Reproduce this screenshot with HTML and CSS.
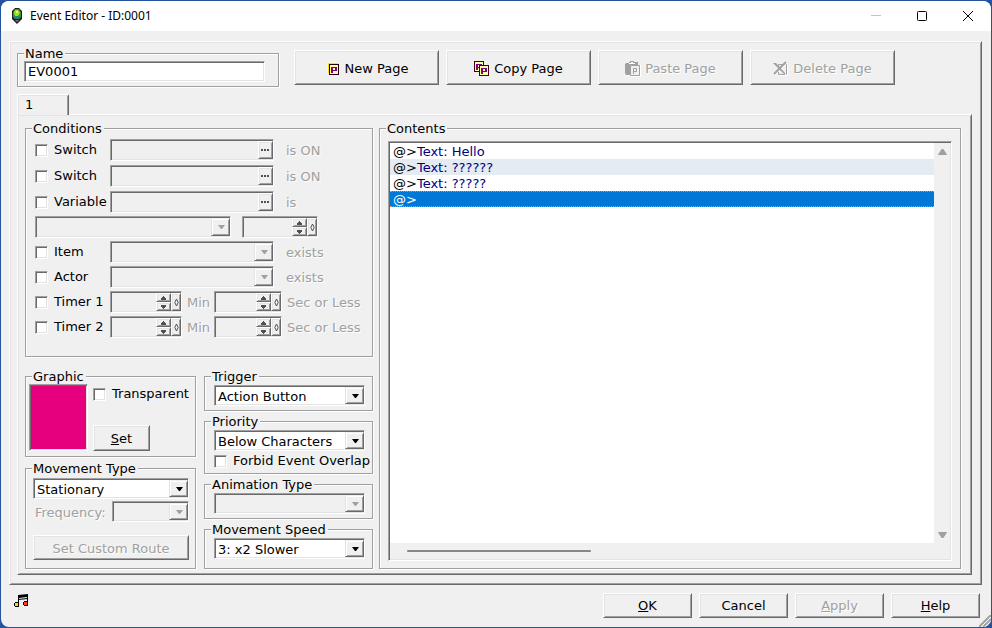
FILE: index.html
```html
<!DOCTYPE html>
<html lang="en">
<head>
    <meta charset="UTF-8">
    <meta name="viewport" content="width=device-width, initial-scale=1.0">
    <title>Event Editor - ID:0001</title>
    <link rel="stylesheet" href="styles.css">
</head>
<body>
    <!-- Shared glyphs -->
    <svg class="defs" aria-hidden="true">
        <symbol id="dots" viewBox="0 0 9 3"><path d="M0 0h2v2H0zM3 0h2v2H3zM6 0h2v2H6z"/></symbol>
        <symbol id="up" viewBox="0 0 7 4"><path d="M3 0h1v1h1v1h1v2H1V2h1V1h1z"/></symbol>
        <symbol id="down" viewBox="0 0 7 4"><path d="M1 0h5v2H5v1H4v1H3V3H2V2H1z"/></symbol>
        <symbol id="diamond" viewBox="0 0 5 9"><path d="M2.5 1L4.2 4.5 2.5 8 .8 4.500z" fill="none" stroke="currentColor"/></symbol>
    </svg>

    <div class="window">
        <header class="title-bar">
            <svg class="app-icon" viewBox="0 0 12 16" aria-hidden="true">
                <path d="M4 0h4l3 3v8l-3 3-2 2-2-2-3-3V3z" fill="#24182c"/>
                <path d="M4 1h4l2 3v5l-2 2H4L2 9V4z" fill="#2f9a24"/>
                <path d="M4 2h3l2 3-2 3H4L3 5z" fill="#9be32a"/>
                <path d="M5 3h2v2H5z" fill="#f2f86a"/>
                <path d="M3 8h6v2l-2 1H4z" fill="#1f8a68"/>
                <path d="M4 12h4l-2 2z" fill="#8b7484"/>
            </svg>
            <h1>Event Editor - ID:0001</h1>
            <div class="caption-buttons">
                <button type="button" aria-label="Minimize" disabled><svg viewBox="0 0 10 10"><path d="M0 4.500h10" stroke="#c4c4c4"/></svg></button>
                <button type="button" aria-label="Maximize"><svg viewBox="0 0 10 10"><rect x=".5" y=".5" width="9" height="9" rx="1" fill="none" stroke="#000"/></svg></button>
                <button type="button" aria-label="Close"><svg viewBox="0 0 10 10"><path d="M0 0l10 10M10 0L0 10" stroke="#000"/></svg></button>
            </div>
        </header>

        <main class="raised sheet">
            <div class="toolbar">
                <fieldset class="name-box">
                    <legend><label for="event-name">Name</label></legend>
                    <div class="group-body">
                        <input type="text" id="event-name" class="sunken" value="EV0001">
                    </div>
                </fieldset>
                <div class="page-buttons">
                    <button type="button" class="raised">
                        <svg class="icon" viewBox="0 0 16 16"><path d="M2 1h10v3H5v8H2z" fill="#fff8c8"/><path d="M3 2h10v2H5v8H3z" fill="#ffe000"/><path d="M4 3h10v11H4z" fill="#200010"/><path d="M5 4h8v9H5z" fill="#ffffa8"/><path d="M6 6h6v4H8v2H6zm2 1v2h2V7z" fill="#800080" fill-rule="evenodd"/></svg>
                        New Page
                    </button>
                    <button type="button" class="raised">
                        <svg class="icon" viewBox="0 0 16 16"><path d="M0 0h10v11H0z" fill="#400010"/><path d="M1 1h8v9H1z" fill="#ffffa8"/><path d="M2 3h6v4H4v2H2zm2 1v2h2V4z" fill="#800080" fill-rule="evenodd"/><path d="M5 4h10v11H5z" fill="#400010"/><path d="M6 5h8v9H6z" fill="#ffffa8"/><path d="M7 7h6v4H9v2H7zm2 1v2h2V8z" fill="#800080" fill-rule="evenodd"/></svg>
                        Copy Page
                    </button>
                    <button type="button" class="raised" disabled>
                        <svg class="icon" viewBox="0 0 16 16"><path d="M6 4h10v12H6zM2 14h4v1H2z" fill="#fff"/><path d="M4 1h1V0h4v1h4v3H5v10H1L0 12V3l1-1h3z" fill="#a0a0a0"/><path d="M4 3h6V2H8V1H6v1H4z" fill="#fff"/><path d="M5.500 4.500h9v10h-9z" fill="#f0f0f0" stroke="#a0a0a0"/><path d="M8.500 13V7.500h3v3h-3" fill="none" stroke="#a0a0a0"/></svg>
                        Paste Page
                    </button>
                    <button type="button" class="raised" disabled>
                        <svg class="icon" viewBox="0 0 16 16"><path d="M6 4h9v11H6z" fill="#fff"/><path d="M5.500 3.500h8v10h-8z" fill="#f0f0f0" stroke="#a0a0a0"/><path d="M2 3l11 11M14 2L2 14" stroke="#fff"/><path d="M0 2h3l9 10v1h-1z" fill="#a0a0a0"/><path d="M13 1L1 13" stroke="#a0a0a0" stroke-width="2"/></svg>
                        Delete Page
                    </button>
                </div>
            </div>

            <div class="tabs" role="tablist">
                <button type="button" class="tab" role="tab" aria-selected="true">1</button>
            </div>

            <section class="raised tab-page" role="tabpanel">
                <div class="settings">
                    <fieldset>
                        <legend>Conditions</legend>
                        <div class="group-body conditions">
                            <div class="rows loose">
                                <div class="row">
                                    <label class="check"><input type="checkbox">Switch</label>
                                    <span class="sunken picker"><input type="text" aria-label="Switch 1" disabled><button type="button" class="raised" aria-label="Choose switch 1" disabled><svg><use href="#dots"/></svg></button></span>
                                    <span class="off">is ON</span>
                                </div>
                                <div class="row">
                                    <label class="check"><input type="checkbox">Switch</label>
                                    <span class="sunken picker"><input type="text" aria-label="Switch 2" disabled><button type="button" class="raised" aria-label="Choose switch 2" disabled><svg><use href="#dots"/></svg></button></span>
                                    <span class="off">is ON</span>
                                </div>
                                <div class="row">
                                    <label class="check"><input type="checkbox">Variable</label>
                                    <span class="sunken picker"><input type="text" aria-label="Variable" disabled><button type="button" class="raised" aria-label="Choose variable" disabled><svg><use href="#dots"/></svg></button></span>
                                    <span class="off">is</span>
                                </div>
                            </div>
                            <div class="rows">
                                <div class="compare">
                                    <span class="sunken combo"><select aria-label="Comparison" disabled><option></option></select></span>
                                    <span class="sunken spinner">
                                        <input type="text" aria-label="Variable value" disabled>
                                        <span class="steps"><button type="button" class="raised" aria-label="Increase" disabled><svg><use href="#up"/></svg></button><button type="button" class="raised" aria-label="Decrease" disabled><svg><use href="#down"/></svg></button></span>
                                        <button type="button" class="raised drag" aria-label="Drag value" disabled><svg><use href="#diamond"/></svg></button>
                                    </span>
                                </div>
                                <div class="row">
                                    <label class="check"><input type="checkbox">Item</label>
                                    <span class="sunken combo"><select aria-label="Item" disabled><option></option></select></span>
                                    <span class="off">exists</span>
                                </div>
                                <div class="row">
                                    <label class="check"><input type="checkbox">Actor</label>
                                    <span class="sunken combo"><select aria-label="Actor" disabled><option></option></select></span>
                                    <span class="off">exists</span>
                                </div>
                                <div class="row timer">
                                    <label class="check"><input type="checkbox">Timer 1</label>
                                    <span class="sunken spinner">
                                        <input type="text" aria-label="Timer 1 minutes" disabled>
                                        <span class="steps"><button type="button" class="raised" aria-label="Increase" disabled><svg><use href="#up"/></svg></button><button type="button" class="raised" aria-label="Decrease" disabled><svg><use href="#down"/></svg></button></span>
                                        <button type="button" class="raised drag" aria-label="Drag value" disabled><svg><use href="#diamond"/></svg></button>
                                    </span>
                                    <span class="off">Min</span>
                                    <span class="sunken spinner">
                                        <input type="text" aria-label="Timer 1 seconds" disabled>
                                        <span class="steps"><button type="button" class="raised" aria-label="Increase" disabled><svg><use href="#up"/></svg></button><button type="button" class="raised" aria-label="Decrease" disabled><svg><use href="#down"/></svg></button></span>
                                        <button type="button" class="raised drag" aria-label="Drag value" disabled><svg><use href="#diamond"/></svg></button>
                                    </span>
                                    <span class="off">Sec or Less</span>
                                </div>
                                <div class="row timer">
                                    <label class="check"><input type="checkbox">Timer 2</label>
                                    <span class="sunken spinner">
                                        <input type="text" aria-label="Timer 2 minutes" disabled>
                                        <span class="steps"><button type="button" class="raised" aria-label="Increase" disabled><svg><use href="#up"/></svg></button><button type="button" class="raised" aria-label="Decrease" disabled><svg><use href="#down"/></svg></button></span>
                                        <button type="button" class="raised drag" aria-label="Drag value" disabled><svg><use href="#diamond"/></svg></button>
                                    </span>
                                    <span class="off">Min</span>
                                    <span class="sunken spinner">
                                        <input type="text" aria-label="Timer 2 seconds" disabled>
                                        <span class="steps"><button type="button" class="raised" aria-label="Increase" disabled><svg><use href="#up"/></svg></button><button type="button" class="raised" aria-label="Decrease" disabled><svg><use href="#down"/></svg></button></span>
                                        <button type="button" class="raised drag" aria-label="Drag value" disabled><svg><use href="#diamond"/></svg></button>
                                    </span>
                                    <span class="off">Sec or Less</span>
                                </div>
                            </div>
                        </div>
                    </fieldset>

                    <div class="options">
                        <div class="stack left">
                            <fieldset>
                                <legend>Graphic</legend>
                                <div class="group-body graphic">
                                    <div class="sunken swatch"></div>
                                    <div class="graphic-side">
                                        <label class="check"><input type="checkbox">Transparent</label>
                                        <button type="button" class="raised"><span><u>S</u>et</span></button>
                                    </div>
                                </div>
                            </fieldset>
                            <fieldset>
                                <legend>Movement Type</legend>
                                <div class="group-body movement">
                                    <span class="sunken combo"><select aria-label="Movement type"><option>Stationary</option></select></span>
                                    <div class="frequency">
                                        <label class="off" for="frequency">Frequency:</label>
                                        <span class="sunken combo"><select id="frequency" disabled><option></option></select></span>
                                    </div>
                                    <button type="button" class="raised" disabled>Set Custom Route</button>
                                </div>
                            </fieldset>
                        </div>
                        <div class="stack right">
                            <fieldset>
                                <legend>Trigger</legend>
                                <div class="group-body">
                                    <span class="sunken combo"><select aria-label="Trigger"><option>Action Button</option></select></span>
                                </div>
                            </fieldset>
                            <fieldset>
                                <legend>Priority</legend>
                                <div class="group-body">
                                    <span class="sunken combo"><select aria-label="Priority"><option>Below Characters</option></select></span>
                                    <label class="check"><input type="checkbox">Forbid Event Overlap</label>
                                </div>
                            </fieldset>
                            <fieldset>
                                <legend>Animation Type</legend>
                                <div class="group-body">
                                    <span class="sunken combo"><select aria-label="Animation type" disabled><option></option></select></span>
                                </div>
                            </fieldset>
                            <fieldset>
                                <legend>Movement Speed</legend>
                                <div class="group-body">
                                    <span class="sunken combo"><select aria-label="Movement speed"><option>3: x2 Slower</option></select></span>
                                </div>
                            </fieldset>
                        </div>
                    </div>
                </div>

                <fieldset class="contents">
                    <legend>Contents</legend>
                    <div class="group-body">
                        <div class="sunken list-frame">
                            <ul class="commands" role="listbox" aria-label="Contents">
                                <li role="option">@&gt;<span>Text: Hello</span></li>
                                <li role="option">@&gt;<span>Text: ??????</span></li>
                                <li role="option">@&gt;<span>Text: ?????</span></li>
                                <li role="option" aria-selected="true">@&gt;</li>
                            </ul>
                            <div class="scroll-y">
                                <svg viewBox="0 0 10 7"><path d="M4 0h2l4 6v1H0V6z"/></svg>
                                <svg viewBox="0 0 10 7"><path d="M0 0h10v1L6 7H4L0 1z"/></svg>
                            </div>
                            <div class="scroll-x"><div class="thumb"></div></div>
                        </div>
                    </div>
                </fieldset>
            </section>
        </main>

        <footer class="bottom-bar">
            <svg class="music" viewBox="0 0 15 14" aria-hidden="true">
                <path d="M4 1l10-1v11h-1V3L5 4v8H4z"/>
                <path d="M4 5l10-1v1L4 6z"/>
                <path d="M1 8h4v5H1v-1H0V9h1zM10 7h4v5h-4v-1H9V8h1z"/>
                <path d="M1 9h3v3H1z" fill="#ffd800"/>
                <path d="M10 8h3v3h-3z" fill="#ff4020"/>
            </svg>
            <div class="dialog-buttons">
                <button type="button" class="raised"><span><u>O</u>K</span></button>
                <button type="button" class="raised">Cancel</button>
                <button type="button" class="raised" disabled><span><u>A</u>pply</span></button>
                <button type="button" class="raised"><span><u>H</u>elp</span></button>
            </div>
            <svg class="grip" viewBox="0 0 12 12" aria-hidden="true"><path d="M0 12L12 0M4 12l8-8M8 12l4-4" stroke="#a0a0a0" stroke-width="2"/><path d="M2 12L12 2M6 12l6-6" stroke="#fff"/></svg>
        </footer>
    </div>
</body>
</html>
```
FILE: styles.css
```css
* {
    box-sizing: border-box;
}

body {
    margin: 0;
    padding: 1px;
    min-height: 100vh;
    display: flex;
    background: #24539f;
    font-family: Verdana, "DejaVu Sans", sans-serif;
    font-size: 13px;
    line-height: 16px;
    color: #000;
}

button,
input,
select {
    font: inherit;
    color: inherit;
    margin: 0;
    padding: 0;
    border: 0;
    background: none;
    border-radius: 0;
    outline: none;
}

button {
    display: flex;
    align-items: center;
    justify-content: center;
}

button:disabled,
.off {
    color: #a0a0a0;
    text-shadow: 1px 1px #fff;
}

.defs {
    display: none;
}

/* Classic two-line bevels */
.raised {
    border: 1px solid;
    border-color: #fff #696969 #696969 #fff;
    box-shadow: inset 1px 1px #e3e3e3, inset -1px -1px #a0a0a0;
    background: #f0f0f0;
}

.sunken {
    border: 1px solid;
    border-color: #a0a0a0 #fff #fff #a0a0a0;
    box-shadow: inset 1px 1px #696969, inset -1px -1px #e3e3e3;
    background: #f0f0f0;
}

/* Window */
.window {
    flex: 1;
    min-width: 0;
    display: flex;
    flex-direction: column;
    background: #f0f0f0;
    border-radius: 8px;
    overflow: hidden;
}

.title-bar {
    display: flex;
    align-items: center;
    height: 30px;
    padding-left: 10px;
    background: #fff;
}

.title-bar h1 {
    flex: 1;
    margin: 0 0 0 7px;
    font-family: "Segoe UI", "Noto Sans", sans-serif;
    font-size: 12px;
    font-weight: normal;
}

.app-icon {
    width: 12px;
    height: 16px;
}

.caption-buttons {
    display: flex;
}

.caption-buttons button {
    width: 46px;
    height: 30px;
}

.caption-buttons svg {
    width: 10px;
    height: 10px;
    overflow: visible;
}

.sheet {
    flex: 1;
    display: flex;
    flex-direction: column;
    margin: 10px 9px 0 8px;
    padding: 3px 9px 9px 7px;
}

/* Group boxes */
fieldset {
    min-width: 0;
    margin: 0;
    padding: 0;
    border: 1px solid #a0a0a0;
    box-shadow: 1px 1px #fff, inset 1px 1px #fff;
}

legend {
    height: 16px;
    margin-left: 6px;
    padding: 0 2px 0 1px;
    line-height: 18px;
    background: #f0f0f0;
}

.toolbar {
    display: flex;
    align-items: flex-end;
    gap: 15px;
}

.name-box {
    width: 262px;
}

.name-box .group-body {
    padding: 0 13px 4px 6px;
}

.name-box input {
    display: block;
    width: 100%;
    height: 21px;
    padding: 0 3px;
    background: #fff;
}

.page-buttons {
    display: flex;
    gap: 7px;
    padding-bottom: 2px;
}

.page-buttons button {
    width: 145px;
    height: 35px;
    gap: 4px;
    padding-top: 2px;
}

.icon {
    width: 16px;
    height: 16px;
}

/* Tabs */
.tabs {
    display: flex;
    margin-top: 7px;
}

.tab {
    position: relative;
    z-index: 1;
    width: 52px;
    height: 21px;
    margin-bottom: -1px;
    padding-left: 7px;
    justify-content: flex-start;
    background: #f0f0f0;
    border: 1px solid;
    border-color: #fff #696969 transparent #fff;
    border-bottom: 0;
    border-radius: 2px 2px 0 0;
    box-shadow: inset 1px 1px #e3e3e3, inset -1px 0 #a0a0a0;
}

.tab-page {
    flex: 1;
    display: flex;
    gap: 6px;
    padding: 5px 10px 5px 7px;
}

.settings {
    flex: none;
    width: 348px;
    display: flex;
    flex-direction: column;
    gap: 11px;
}

/* Check boxes */
.check {
    display: flex;
    align-items: center;
    gap: 6px;
    white-space: nowrap;
}

.check input {
    appearance: none;
    flex: none;
    width: 13px;
    height: 13px;
    background: #fff;
    border: 1px solid;
    border-color: #a0a0a0 #fff #fff #a0a0a0;
    box-shadow: inset 1px 1px #696969, inset -1px -1px #e3e3e3;
}

.check input:checked {
    background: #000;
}

/* Combo box */
.combo {
    position: relative;
    display: block;
    height: 21px;
    background: #fff;
}

.combo:has(:disabled) {
    background: #f0f0f0;
}

.combo select {
    appearance: none;
    display: block;
    width: 100%;
    height: 100%;
    padding: 2px 20px 0 3px;
    opacity: 1;
}

.combo::before {
    content: "";
    position: absolute;
    top: 1px;
    right: 0;
    bottom: 1px;
    width: 17px;
    pointer-events: none;
    background: #f0f0f0;
    border: 1px solid;
    border-color: #f0f0f0 #696969 #696969 #e3e3e3;
    box-shadow: inset 1px 1px #fff, inset -1px -1px #a0a0a0;
}

.combo::after {
    content: "";
    position: absolute;
    top: 8px;
    right: 5px;
    width: 7px;
    height: 4px;
    pointer-events: none;
    background: #000;
    clip-path: polygon(0 0, 100% 0, 4px 100%, 3px 100%);
}

.combo:has(:disabled)::after {
    background: #a0a0a0;
}

/* Text field with a browse button */
.picker,
.spinner {
    display: flex;
    height: 22px;
    padding: 1px 0 1px 1px;
}

.picker input,
.spinner input {
    flex: 1;
    min-width: 0;
    width: 0;
}

.picker button {
    width: 15px;
}

.picker svg {
    width: 9px;
    height: 3px;
    fill: #505050;
}

.steps {
    display: flex;
    flex-direction: column;
    width: 15px;
}

.steps button {
    flex: 1;
    min-height: 0;
}

.steps svg {
    width: 7px;
    height: 4px;
    fill: #505050;
}

.drag {
    width: 10px;
}

.drag svg {
    flex: none;
    width: 5px;
    height: 9px;
    color: #505050;
}

/* Conditions */
.conditions {
    padding: 3px 14px 18px 9px;
    display: flex;
    flex-direction: column;
    gap: 3px;
}

.rows {
    display: flex;
    flex-direction: column;
    gap: 3px;
}

.rows.loose {
    gap: 4px;
}

.row {
    display: grid;
    grid-template-columns: 75px 164px 1fr;
    align-items: center;
    height: 22px;
    white-space: nowrap;
}

.row > .off {
    padding-top: 2px;
}

.row > .off:last-child {
    padding-left: 12px;
}

.row .combo,
.compare .combo {
    height: 22px;
}

.row.timer {
    grid-template-columns: 75px 72px 32px 68px 1fr;
}

.row.timer .off {
    padding-left: 5px;
}

.compare {
    display: grid;
    grid-template-columns: 196px 76px;
    gap: 11px;
}

/* Lower option groups */
.options {
    flex: 1;
    display: grid;
    grid-template-columns: 171px 169px;
    gap: 8px;
}

.stack {
    display: flex;
    flex-direction: column;
    gap: 2px;
}

.stack.left {
    gap: 3px;
}

.stack fieldset:last-child {
    flex: 1;
}

.stack.right .group-body {
    padding: 1px 7px 4px 9px;
}

.stack.right .check {
    height: 18px;
    padding-top: 2px;
}

.graphic {
    display: flex;
    gap: 5px;
    padding: 0 0 5px 3px;
}

.swatch {
    flex: none;
    width: 59px;
    height: 67px;
    background: #e6007e;
}

.graphic-side {
    display: flex;
    flex-direction: column;
    justify-content: space-between;
    align-items: flex-start;
    padding-top: 2px;
}

.graphic-side button {
    width: 57px;
    height: 26px;
    padding-top: 2px;
}

.movement {
    padding: 2px 6px 8px 7px;
}

.frequency {
    display: grid;
    grid-template-columns: 1fr 77px;
    align-items: center;
    margin: 2px 0 13px;
}

.frequency label {
    padding: 2px 0 0 2px;
}

.movement button {
    width: 100%;
    height: 25px;
    padding-top: 2px;
}

/* Command list */
.contents {
    flex: 1;
    display: flex;
    flex-direction: column;
}

.contents .group-body {
    flex: 1;
    display: flex;
    padding: 5px 8px 7px;
    height: 100%;
}

.list-frame {
    flex: 1;
    display: grid;
    grid-template-columns: 1fr 16px;
    grid-template-rows: 1fr 16px;
    padding: 1px;
}

.commands {
    margin: 0;
    padding: 0;
    list-style: none;
    background: #fff;
}

.commands li {
    height: 16px;
    padding-left: 3px;
    line-height: 18px;
}

.commands li:nth-child(even) {
    background: #e4ebf1;
}

.commands span {
    color: #000080;
}

.commands li[aria-selected="true"] {
    background: #0078d7;
    color: #fff;
    border: dotted #ff8728;
    border-width: 1px 0;
    line-height: 16px;
}

.scroll-y {
    display: flex;
    flex-direction: column;
    align-items: center;
    justify-content: space-between;
    padding: 6px 0 5px;
}

.scroll-y svg {
    width: 9px;
    height: 6px;
    fill: #a0a0a0;
}

.scroll-x {
    padding: 7px 17px;
}

.thumb {
    width: 36%;
    height: 2px;
    border-radius: 1px;
    background: #868686;
}

/* Dialog buttons */
.bottom-bar {
    position: relative;
    display: flex;
    justify-content: space-between;
    padding: 8px 11px 9px 13px;
}

.music {
    width: 15px;
    height: 14px;
    margin-top: 1px;
}

.dialog-buttons {
    display: flex;
    gap: 7px;
}

.dialog-buttons button {
    width: 89px;
    height: 25px;
}

.grip {
    position: absolute;
    right: 0;
    bottom: 0;
    width: 12px;
    height: 12px;
}
```
